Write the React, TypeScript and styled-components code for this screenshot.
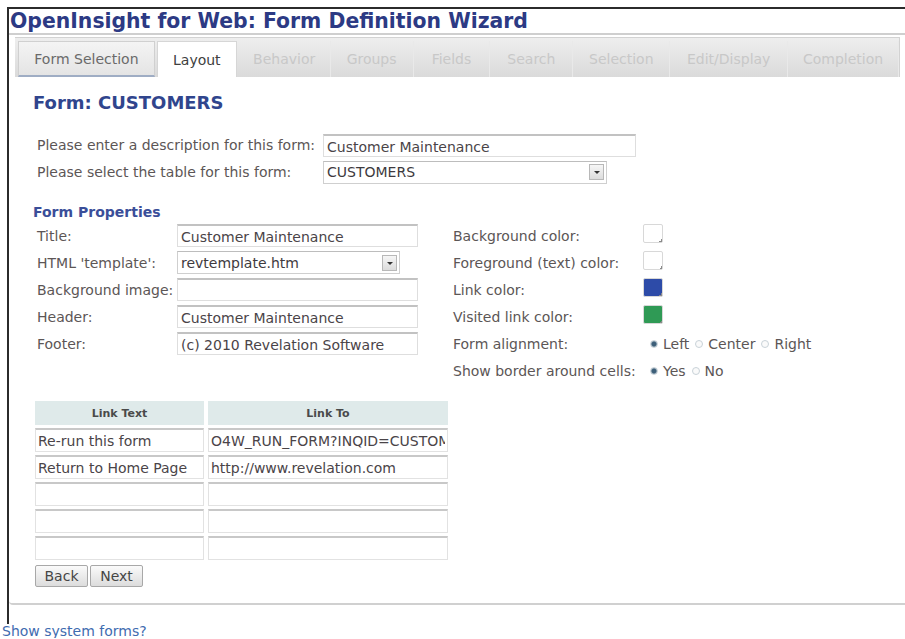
import React from 'react';
import styled, { createGlobalStyle, css } from 'styled-components';

const GlobalStyle = createGlobalStyle`
  html, body {
    margin: 0;
    padding: 0;
    background: #fff;
  }
  body {
    font-family: "DejaVu Sans", Verdana, sans-serif;
    font-size: 14px;
    color: #5a5a5a;
  }
`;

type TabState = 'done' | 'active' | 'off';

const tabs: { label: string; width: number; state: TabState }[] = [
    { label: 'Form Selection', width: 137, state: 'done' },
    { label: 'Layout', width: 80, state: 'active' },
    { label: 'Behavior', width: 92, state: 'off' },
    { label: 'Groups', width: 83, state: 'off' },
    { label: 'Fields', width: 77, state: 'off' },
    { label: 'Search', width: 83, state: 'off' },
    { label: 'Selection', width: 97, state: 'off' },
    { label: 'Edit/Display', width: 118, state: 'off' },
    { label: 'Completion', width: 111, state: 'off' },
];

const links = [
    { text: 'Re-run this form', to: 'O4W_RUN_FORM?INQID=CUSTOMERS' },
    { text: 'Return to Home Page', to: 'http://www.revelation.com' },
    { text: '', to: '' },
    { text: '', to: '' },
    { text: '', to: '' },
];

export default function App() {
    return (
        <>
            <GlobalStyle />
            <Frame>
                <PageTitle>OpenInsight for Web: Form Definition Wizard</PageTitle>
                <TitleRule />
                <TabBar>
                    {tabs.map((t) => (
                        <Tab key={t.label} $state={t.state} $w={t.width}>
                            {t.label}
                        </Tab>
                    ))}
                </TabBar>
                <Panel>
                    <FormHeading>Form: CUSTOMERS</FormHeading>

                    <DescGrid>
                        <Label>Please enter a description for this form:</Label>
                        <TextBox $w={313} value="Customer Maintenance" readOnly />
                        <Label>Please select the table for this form:</Label>
                        <SelectBox $w={284}>
                            <span>CUSTOMERS</span>
                            <DropButton />
                        </SelectBox>
                    </DescGrid>

                    <SectionHeading>Form Properties</SectionHeading>
                    <Properties>
                        <PropGrid $labelCol={140}>
                            <Label>Title:</Label>
                            <TextBox $w={241} value="Customer Maintenance" readOnly />
                            <Label>HTML 'template':</Label>
                            <SelectBox $w={223}>
                                <span>revtemplate.htm</span>
                                <DropButton />
                            </SelectBox>
                            <Label>Background image:</Label>
                            <TextBox $w={241} value="" readOnly />
                            <Label>Header:</Label>
                            <TextBox $w={241} value="Customer Maintenance" readOnly />
                            <Label>Footer:</Label>
                            <TextBox $w={241} value="(c) 2010 Revelation Software" readOnly />
                        </PropGrid>

                        <PropGrid $labelCol={190}>
                            <Label>Background color:</Label>
                            <Swatch $color="#ffffff" />
                            <Label>Foreground (text) color:</Label>
                            <Swatch $color="#ffffff" />
                            <Label>Link color:</Label>
                            <Swatch $color="#2d4ba8" />
                            <Label>Visited link color:</Label>
                            <Swatch $color="#2f9a55" />
                            <Label>Form alignment:</Label>
                            <RadioGroup>
                                <Radio $checked />
                                <RadioText>Left</RadioText>
                                <Radio />
                                <RadioText>Center</RadioText>
                                <Radio />
                                <RadioText>Right</RadioText>
                            </RadioGroup>
                            <Label>Show border around cells:</Label>
                            <RadioGroup>
                                <Radio $checked />
                                <RadioText>Yes</RadioText>
                                <Radio />
                                <RadioText>No</RadioText>
                            </RadioGroup>
                        </PropGrid>
                    </Properties>

                    <LinkTable>
                        <HeadCell>Link Text</HeadCell>
                        <HeadCell>Link To</HeadCell>
                        {links.map((l, i) => (
                            <React.Fragment key={i}>
                                <CellInput value={l.text} readOnly />
                                <CellInput value={l.to} readOnly />
                            </React.Fragment>
                        ))}
                    </LinkTable>

                    <ButtonRow>
                        <NavButton>Back</NavButton>
                        <NavButton>Next</NavButton>
                    </ButtonRow>
                </Panel>
            </Frame>
            <SystemLink href="#">Show system forms?</SystemLink>
        </>
    );
}

const Frame = styled.div`
    margin: 7px 0 0 7px;
    height: 617px;
    box-sizing: border-box;
    border-top: 2px solid #2b2b2b;
    border-left: 2px solid #2b2b2b;
`;

const PageTitle = styled.h1`
    margin: 0;
    padding-left: 1px;
    height: 24px;
    line-height: 24px;
    font-size: 20.4px;
    font-weight: bold;
    color: #2c3a84;
    white-space: nowrap;
`;

const TitleRule = styled.div`
    height: 2px;
    background: #cfcfcf;
    margin-bottom: 2px;
`;

const TabBar = styled.div`
    display: flex;
    height: 40px;
    margin: 0 5px 0 6px;
    padding: 3px 0 0 3px;
    box-sizing: border-box;
    background: linear-gradient(#eeeeee, #dadada);
    border-top: 1px solid #d2d2d2;
    border-right: 1px solid #d2d2d2;
`;

const Tab = styled.div<{ $state: TabState; $w: number }>`
    width: ${(p) => p.$w}px;
    display: flex;
    align-items: center;
    justify-content: center;
    font-size: 14px;
    box-sizing: border-box;
    color: #c8c8c8;
    border-right: 1px solid #e9e9e9;
    ${(p) =>
        p.$state === 'done' &&
        css`
            color: #6a6a6a;
            background: linear-gradient(#f4f4f4, #e4e4e4);
            border: 1px solid #d0d0d0;
            border-bottom: 2px solid #9fadc4;
        `}
    ${(p) =>
        p.$state === 'active' &&
        css`
            color: #404040;
            background: #fff;
            margin: 0 2px;
            border: 1px solid #d6d6d6;
            border-bottom: none;
        `}
`;

const Panel = styled.div`
    height: 528px;
    box-sizing: border-box;
    padding: 16px 0 0 24px;
    border-bottom: 2px solid #d0d0d0;
    border-bottom-left-radius: 4px;
`;

const FormHeading = styled.h2`
    margin: 0;
    height: 20px;
    line-height: 20px;
    font-size: 18px;
    font-weight: bold;
    color: #30458d;
`;

const DescGrid = styled.div`
    margin: 20px 0 0 4px;
    display: grid;
    grid-template-columns: 286px auto;
    grid-auto-rows: 24px;
    row-gap: 3px;
    align-items: center;
    justify-items: start;
`;

const Label = styled.div`
    white-space: nowrap;
    color: #5c5656;
`;

const TextBox = styled.input<{ $w: number }>`
    width: ${(p) => p.$w}px;
    height: 23px;
    box-sizing: border-box;
    padding: 2px 3px 0;
    font-family: inherit;
    font-size: 14px;
    color: #4a4448;
    background: #fff;
    border: 1px solid #dedede;
    border-top: 2px solid #c2c2c2;
    outline: none;
`;

const SelectBox = styled.div<{ $w: number }>`
    width: ${(p) => p.$w}px;
    height: 23px;
    box-sizing: border-box;
    display: flex;
    align-items: center;
    justify-content: space-between;
    padding: 0 2px 0 3px;
    color: #3e3a3e;
    background: #fff;
    border: 1px solid #cfcfcf;
    border-top-color: #bdbdbd;
`;

const DropButton = styled.span`
    width: 15px;
    height: 16px;
    box-sizing: border-box;
    border: 1px solid #b8b8b8;
    background: linear-gradient(#f6f6f6, #dcdcdc);
    position: relative;
    &::after {
        content: '';
        position: absolute;
        left: 4px;
        top: 6px;
        border-left: 3px solid transparent;
        border-right: 3px solid transparent;
        border-top: 3px solid #333;
    }
`;

const SectionHeading = styled.h3`
    margin: 20px 0 0;
    height: 16px;
    line-height: 16px;
    font-size: 14px;
    font-weight: bold;
    color: #3a4e99;
`;

const Properties = styled.div`
    display: flex;
    gap: 35px;
    margin: 2px 0 0 4px;
`;

const PropGrid = styled.div<{ $labelCol: number }>`
    display: grid;
    grid-template-columns: ${(p) => p.$labelCol}px auto;
    grid-auto-rows: 27px;
    align-items: center;
    justify-items: start;
`;

const Swatch = styled.span<{ $color: string }>`
    position: relative;
    width: 18px;
    height: 17px;
    background: ${(p) => p.$color};
    border: 1px solid #d8d8d8;
    border-radius: 2px;
    margin-top: -4px;
    /* little folded corner in the bottom right */
    &::after {
        content: '';
        position: absolute;
        right: 0;
        bottom: 0;
        width: 3px;
        height: 3px;
        background: linear-gradient(135deg, transparent 50%, #8a8a8a 50%);
    }
`;

const RadioGroup = styled.div`
    display: flex;
    align-items: center;
    color: #5c5656;
    white-space: nowrap;
    margin-left: 7px;
`;

const RadioText = styled.span`
    margin: 0 6px 0 5px;
`;

const Radio = styled.span<{ $checked?: boolean }>`
    display: inline-block;
    width: 8px;
    height: 8px;
    border-radius: 50%;
    box-sizing: border-box;
    border: 1px solid #c9d2d8;
    background: ${(p) => (p.$checked ? 'radial-gradient(circle, #3d5f79 45%, #9fb2c0 75%)' : '#fafafa')};
`;

const LinkTable = styled.div`
    margin: 17px 0 0 2px;
    display: grid;
    grid-template-columns: 169px 240px;
    grid-auto-rows: 24px;
    column-gap: 4px;
    row-gap: 3px;
`;

const HeadCell = styled.div`
    display: flex;
    align-items: center;
    justify-content: center;
    background: #dfeaea;
    font-size: 11px;
    font-weight: bold;
    color: #4a4a4a;
`;

const CellInput = styled.input`
    width: 100%;
    height: 100%;
    box-sizing: border-box;
    padding: 1px 2px 0;
    font-family: inherit;
    font-size: 14px;
    color: #4a4448;
    background: #fff;
    border: 1px solid #e2e2e2;
    border-top: 2px solid #c8c8c8;
    outline: none;
`;

const ButtonRow = styled.div`
    display: flex;
    gap: 2px;
    margin: 5px 0 0 2px;
`;

const NavButton = styled.button`
    height: 22px;
    width: 53px;
    padding: 0;
    font-family: inherit;
    font-size: 14px;
    color: #454545;
    background: linear-gradient(#fafafa, #dcdcdc);
    border: 1px solid #a8a8a8;
    border-radius: 2px;
`;

const SystemLink = styled.a`
    display: block;
    margin: 1px 0 0 2px;
    font-size: 14px;
    line-height: 13px;
    color: #3f6cb0;
    text-decoration: none;
`;
